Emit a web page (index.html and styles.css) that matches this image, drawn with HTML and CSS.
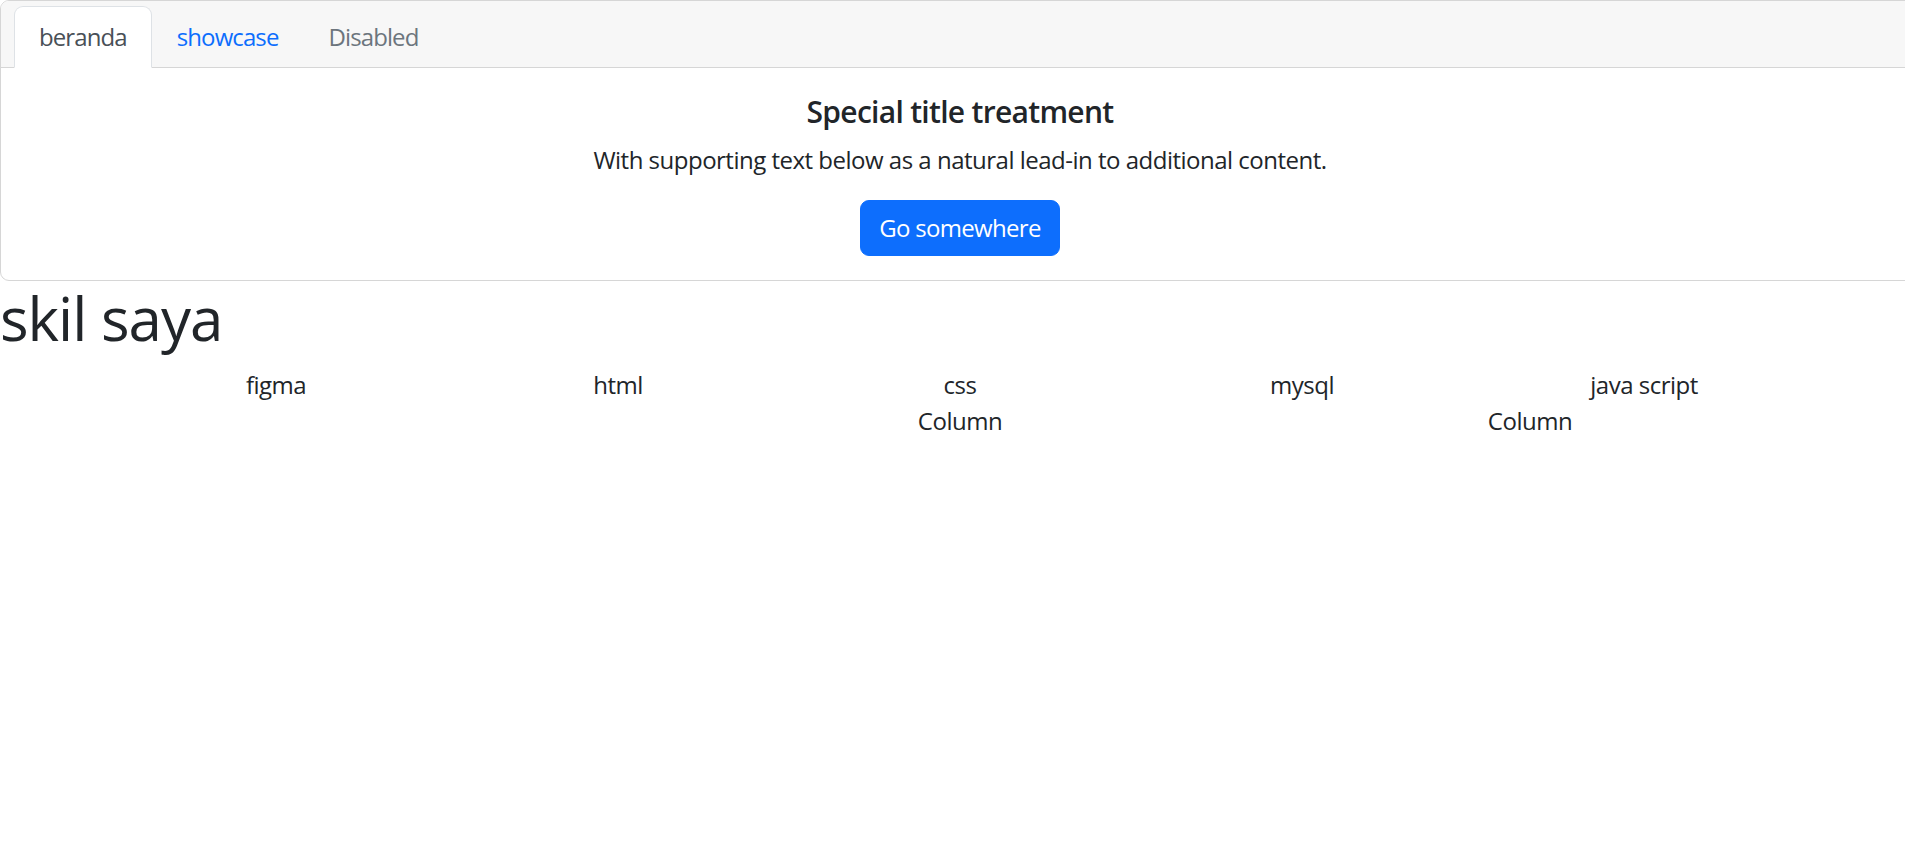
FILE: index.html
```html
<!DOCTYPE html>
<html lang="id">
<head>
<meta charset="utf-8">
<title>skil saya</title>
<link rel="stylesheet" href="styles.css">
</head>
<body>
<div class="page">
  <div class="card">
    <div class="card-header">
      <ul class="tabs">
        <li><a class="tab active">beranda</a></li>
        <li><a class="tab link">showcase</a></li>
        <li><a class="tab disabled">Disabled</a></li>
      </ul>
    </div>
    <div class="card-body">
      <h5 class="card-title">Special title treatment</h5>
      <p class="card-text">With supporting text below as a natural lead-in to additional content.</p>
      <a class="btn">Go somewhere</a>
    </div>
  </div>
  <h1 class="heading">skil saya</h1>
  <div class="container">
    <div class="row">
      <div class="col">figma</div>
      <div class="col">html</div>
      <div class="col">css</div>
      <div class="col">mysql</div>
      <div class="col">java script</div>
    </div>
    <div class="row row-end">
      <div class="col-4">Column</div>
      <div class="col-4">Column</div>
    </div>
  </div>
</div>
</body>
</html>
```

FILE: styles.css
```css
html, body {
  margin: 0;
  padding: 0;
  background: #fff;
  overflow: hidden;
}
body {
  font-family: "Open Sans", "Noto Sans", sans-serif;
  font-size: 24px;
  line-height: 36px;
  color: #212529;
  letter-spacing: -0.5px;
}
.page {
  width: 1920px;
}
.card {
  border: 1px solid #d6d6d6;
  border-radius: 9px;
  background: #fff;
}
.card-header {
  background: #f7f7f7;
  border-bottom: 1px solid #d6d6d6;
  border-radius: 8px 8px 0 0;
  padding: 5px 13px 0;
}
.tabs {
  list-style: none;
  margin: 0 0 -1px;
  padding: 0;
  display: flex;
}
.tab {
  display: block;
  padding: 12px 24px;
  border: 1px solid transparent;
  border-radius: 9px 9px 0 0;
  text-decoration: none;
  letter-spacing: -0.9px;
}
.tab.active {
  background: #fff;
  color: #495057;
  border-color: #dee2e6 #dee2e6 #fff;
}
.tab.link {
  color: #0d6efd;
}
.tab.disabled {
  color: #6c757d;
}
.card-body {
  padding: 24px;
  text-align: center;
}
.card-title {
  margin: 0 0 12px;
  padding-top: 2px;
  height: 34px;
  font-size: 30px;
  line-height: 36px;
  font-weight: 600;
  letter-spacing: -0.7px;
}
.card-text {
  margin: 0 0 24px;
  padding-top: 2px;
  height: 34px;
}
.btn {
  display: inline-block;
  background: #0d6efd;
  color: #fff;
  border: 1px solid #0d6efd;
  border-radius: 9px;
  padding: 9px 18px;
  line-height: 36px;
  letter-spacing: -0.7px;
}
.heading {
  margin: 0 0 12px;
  padding-top: 1px;
  height: 71px;
  font-size: 60px;
  line-height: 72px;
  font-weight: 500;
  letter-spacing: -1px;
}
.container {
  width: 1710px;
  margin: 0 auto;
  padding-top: 2px;
  text-align: center;
}
.row {
  display: flex;
}
.col {
  flex: 1 1 0;
}
.row-end {
  justify-content: flex-end;
}
.col-4 {
  width: 570px;
}
```
